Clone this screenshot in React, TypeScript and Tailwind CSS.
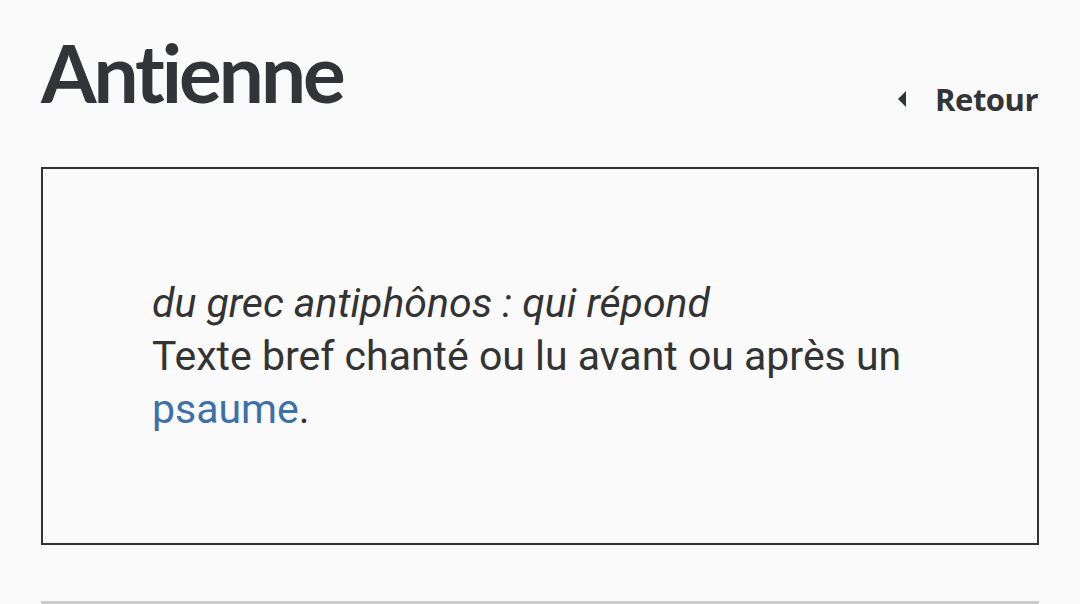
import React from "react";

export default function App() {
  return (
    <div className="w-[1080px] h-[604px] overflow-hidden bg-[#fafafa] px-[41px]">
      <div className="flex items-start justify-between h-[167px]">
        <h1 className="mt-[30px] text-[80px] leading-[84px] font-bold tracking-[-3px] text-[#333438] [font-family:Lato,sans-serif]">
          Antienne
        </h1>
        <a className="mt-[76px] mr-[1px] flex items-center text-[#333438] text-[31px] font-bold [font-family:'Open_Sans',sans-serif]">
          <svg width="8" height="16" viewBox="0 0 8 16" className="mr-[29px]">
            <path d="M8 0 L0 8 L8 16 Z" fill="#333438" />
          </svg>
          <span className="tracking-[-0.5px]">Retour</span>
        </a>
      </div>
      <div className="h-[378px] border-2 border-[#333] flex items-center px-[109px] text-[41px] leading-[53px] text-[#333] [font-family:Roboto,sans-serif]">
        <p>
          <em>du grec antiphônos : qui répond</em>
          <br />
          Texte bref chanté ou lu avant ou après un{" "}
          <a className="text-[#3d6fa8]">psaume</a>.
        </p>
      </div>
      <div className="mt-[56px] h-[3px] bg-[#cccccc]" />
    </div>
  );
}
